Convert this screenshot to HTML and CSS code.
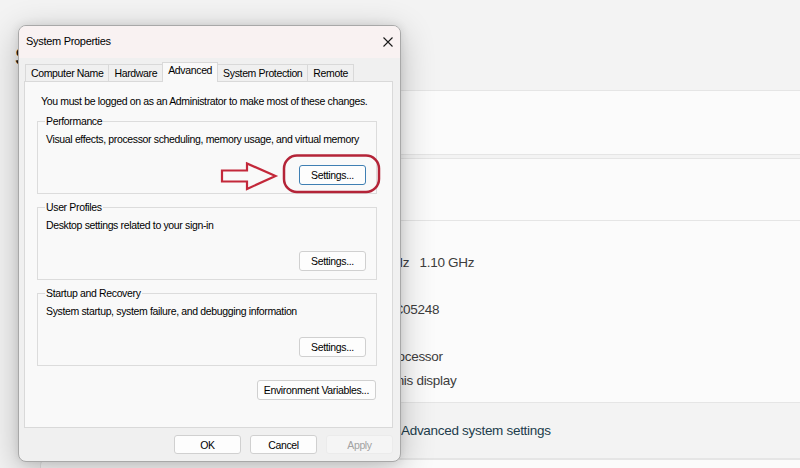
FILE: index.html
```html
<!DOCTYPE html>
<html lang="en">
<head>
  <meta charset="UTF-8" />
  <meta name="viewport" content="width=device-width, initial-scale=1.0"/>
  <title>System Properties</title>
  <link rel="stylesheet" href="styles.css">
</head>
<body>
  <div class="settings">
    <h1 class="page-title">System</h1>

    <div class="content">
      <div class="card device-card"></div>

      <div class="card expander">
        <div class="expander-head"></div>
        <div class="specs">
          <div class="spec">Intel(R) Pentium(R)  N5030 @ 1.10GHz   1.10 GHz</div>
          <div class="spec skip">3F2A9104-8166-4C17-A053-7E2183C05248</div>
          <div class="spec skip">64-bit operating system, x64-based processor</div>
          <div class="spec">No pen or touch input is available for this display</div>
        </div>
      </div>

      <div class="related">
        <a class="related-link">Advanced system settings</a>
      </div>

      <div class="card next-card"></div>
    </div>
  </div>

  <div class="dialog">
    <div class="titlebar">
      <span class="title">System Properties</span>
      <svg class="close" width="10" height="10" viewBox="0 0 10 10">
        <path d="M0.5 0.5 L9.5 9.5 M9.5 0.5 L0.5 9.5" />
      </svg>
    </div>

    <div class="dialog-body">
      <div class="tabs">
        <div class="tab">Computer Name</div>
        <div class="tab">Hardware</div>
        <div class="tab active">Advanced</div>
        <div class="tab">System Protection</div>
        <div class="tab">Remote</div>
      </div>

      <div class="panel">
        <p class="note">You must be logged on as an Administrator to make most of these changes.</p>

        <fieldset class="group">
          <legend>Performance</legend>
          <p class="group-text">Visual effects, processor scheduling, memory usage, and virtual memory</p>
          <div class="group-actions"><button class="btn default">Settings...</button></div>
        </fieldset>

        <fieldset class="group">
          <legend>User Profiles</legend>
          <p class="group-text">Desktop settings related to your sign-in</p>
          <div class="group-actions"><button class="btn">Settings...</button></div>
        </fieldset>

        <fieldset class="group">
          <legend>Startup and Recovery</legend>
          <p class="group-text">System startup, system failure, and debugging information</p>
          <div class="group-actions"><button class="btn">Settings...</button></div>
        </fieldset>

        <div class="env-row"><button class="btn wide">Environment Variables...</button></div>
      </div>

      <div class="dialog-actions">
        <button class="btn">OK</button>
        <button class="btn">Cancel</button>
        <button class="btn" disabled>Apply</button>
      </div>
    </div>
  </div>

  <!-- red markup drawn over the screenshot -->
  <svg class="markup" width="166" height="48" viewBox="218 150 166 48">
    <path class="arrow" d="M222 170.5 H247 V163.5 L275.5 176 L247 189 V181.5 H222 Z" />
    <rect class="ring" x="284" y="155.5" width="95" height="36.5" rx="13" />
  </svg>
</body>
</html>
```

FILE: styles.css
```css
body {
  margin: 0;
  height: 468px;
  overflow: hidden;
  position: relative;
  background: #f3f3f3;
  font-family: "Liberation Sans", Arial, sans-serif;
}

/* settings page behind the dialog */

.settings {
  width: 840px;
  padding-left: 15px;
  font-size: 13.5px;
  letter-spacing: -0.3px;
  color: #1b1b1b;
}

.page-title {
  margin: 0;
  height: 90px;
  box-sizing: border-box;
  padding-top: 43px;
  font-size: 24px;
  line-height: 28px;
  font-weight: bold;
  letter-spacing: 0;
}

.content {
  margin-left: 25px;
}

.card {
  background: #fbfbfb;
  border: 1px solid #e5e5e5;
  border-radius: 6px;
}

.device-card {
  height: 65px;
  box-sizing: border-box;
  margin-bottom: 3px;
}

.expander {
  border-radius: 6px 6px 0 0;
}

.expander-head {
  height: 62px;
  box-sizing: border-box;
  border-bottom: 1px solid #e5e5e5;
}

.specs {
  padding: 30px 0 10px 141px;
}

.spec {
  line-height: 23.5px;
  white-space: pre;
  color: #3d3d3d;
}

.spec.skip {
  margin-top: 23.5px;
}

.related {
  height: 56px;
  box-sizing: border-box;
  display: flex;
  align-items: center;
  padding-left: 361px;
  background: #f3f3f3;
  border-bottom: 1px solid #e5e5e5;
}

.related-link {
  color: #223d4c;
}

.next-card {
  height: 40px;
  border-radius: 6px 6px 0 0;
  border-bottom: none;
}

/* System Properties dialog */

.dialog {
  position: absolute;
  left: 18px;
  top: 25px;
  width: 383px;
  height: 437px;
  box-sizing: border-box;
  border: 1px solid #a8a8a8;
  border-radius: 8px;
  background: #f0f0f0;
  box-shadow: 0 8px 34px rgba(0, 0, 0, 0.24), 0 0 10px rgba(0, 0, 0, 0.1);
  overflow: hidden;
  font-size: 10.5px;
  line-height: 13px;
  letter-spacing: -0.35px;
  color: #000;
}

.titlebar {
  height: 31px;
  display: flex;
  align-items: center;
  justify-content: space-between;
  padding: 0 7px 1px 7px;
  background: #f9f2f2;
}

.title {
  font-size: 11px;
  letter-spacing: -0.3px;
}

.close path {
  stroke: #1a1a1a;
  stroke-width: 1.1;
  fill: none;
}

.dialog-body {
  padding: 0 7px 0 5px;
}

.tabs {
  height: 24px;
  margin-bottom: -1px;
  padding-left: 1px;
  display: flex;
  align-items: flex-end;
}

.tab {
  height: 16px;
  line-height: 16px;
  padding: 0 5px;
  margin-bottom: 1px;
  margin-right: -1px;
  border: 1px solid #d9d9d9;
  border-bottom: none;
  background: #f0f0f0;
}

.tab.active {
  position: relative;
  z-index: 1;
  height: 19px;
  line-height: 15px;
  margin-bottom: 0;
  background: #f9f9f9;
}

.panel {
  height: 347px;
  box-sizing: border-box;
  padding: 13px 15px 0 12px;
  border: 1px solid #d9d9d9;
  background: #f9f9f9;
}

.note {
  margin: 0 0 0 4px;
}

.group {
  margin: 7px 0 0;
  padding: 5px 10px 8px 7px;
  border: 1px solid #dcdcdc;
}

.group legend {
  padding: 0 1px;
}

.group-text {
  margin: 0 0 0 1px;
}

.group-actions {
  display: flex;
  justify-content: flex-end;
  margin-top: 19px;
}

.btn {
  width: 67px;
  height: 20px;
  padding: 0;
  border: 1px solid #d0d0d0;
  border-radius: 3px;
  background: #fdfdfd;
  font-family: inherit;
  font-size: 10.5px;
  letter-spacing: -0.35px;
  color: #000;
}

.btn.default {
  border-color: #3f7fb3;
}

.btn.wide {
  width: auto;
  padding: 0 6px;
}

.btn:disabled {
  background: #f5f5f5;
  border-color: #ebebeb;
  color: #a2a2a2;
}

.env-row {
  display: flex;
  justify-content: flex-end;
  margin-top: 14px;
  padding-right: 1px;
}

.dialog-actions {
  display: flex;
  justify-content: flex-end;
  gap: 9px;
  margin-top: 7px;
}

.dialog-actions .btn {
  height: 19px;
}

/* annotation */

.markup {
  position: absolute;
  left: 218px;
  top: 150px;
}

.arrow {
  fill: none;
  stroke: #c3283a;
  stroke-width: 2.2;
}

.ring {
  fill: none;
  stroke: #b42438;
  stroke-width: 2.5;
}
```
